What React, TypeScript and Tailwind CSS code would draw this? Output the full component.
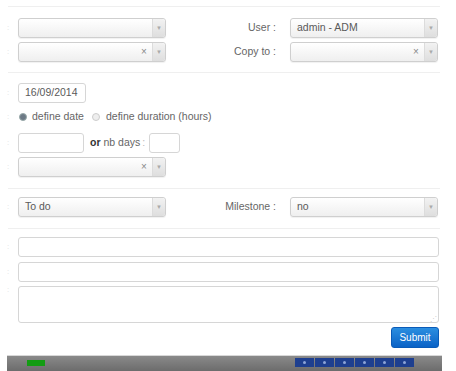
import React from "react";

function Select(props: { value?: string; clear?: boolean; className?: string }) {
  return (
    <div
      className={`h-[20px] flex items-stretch border border-[#cfcfcf] rounded-[3px] bg-gradient-to-b from-white to-[#efefef] shadow-[0_1px_1px_rgba(0,0,0,0.06)] ${props.className ?? "w-[148px]"}`}
    >
      <div className="flex-1 flex items-center pl-[6px] text-[10.5px] text-[#5a5a5a]">
        {props.value}
      </div>
      {props.clear && (
        <div className="w-[16px] flex items-center justify-center text-[10px] text-[#888] leading-none">
          ×
        </div>
      )}
      <div className="w-[13px] border-l border-[#dcdcdc] bg-gradient-to-b from-[#f2f2f2] to-[#dedede] flex items-center justify-center rounded-r-[3px]">
        <span className="text-[6px] text-[#aaa] leading-none">▼</span>
      </div>
    </div>
  );
}

function Input(props: { value?: string; className?: string }) {
  return (
    <div
      className={`h-[20px] border border-[#d6d6d6] rounded-[3px] bg-white flex items-center pl-[6px] text-[10.5px] text-[#5a5a5a] ${props.className ?? ""}`}
    >
      {props.value}
    </div>
  );
}

function Sep(props: { className?: string }) {
  return <div className={`ml-[8px] w-[432px] h-px bg-[#efefef] ${props.className ?? ""}`} />;
}

function Tick() {
  return <span className="w-[10px] pl-[7px] text-[8px] text-[#e2e2e2] leading-none">:</span>;
}

export default function App(): React.JSX.Element {
  return (
    <div className="w-[456px] h-[371px] bg-white overflow-hidden relative font-['Liberation_Sans',Arial,sans-serif]">
      <Sep className="mt-[6px]" />

      <div className="mt-[11px] flex items-center">
        <Tick />
        <Select className="ml-[8px] w-[148px]" />
        <div className="w-[110px] text-right text-[10.5px] text-[#666]">User :</div>
        <Select value="admin - ADM" className="ml-[14px] w-[148px]" />
      </div>
      <div className="mt-[4px] flex items-center">
        <Tick />
        <Select clear className="ml-[8px] w-[148px]" />
        <div className="w-[110px] text-right text-[10.5px] text-[#666]">Copy to :</div>
        <Select clear className="ml-[14px] w-[148px]" />
      </div>

      <Sep className="mt-[10px]" />

      <div className="mt-[10px] flex items-center">
        <Tick />
        <Input value="16/09/2014" className="ml-[8px] w-[68px]" />
      </div>
      <div className="mt-[5px] h-[18px] flex items-center text-[10.5px] text-[#666]">
        <Tick />
        <span className="ml-[9px] w-[8px] h-[8px] rounded-full bg-[#6d7a86] border border-[#9aa]" />
        <span className="ml-[5px]">define date</span>
        <span className="ml-[8px] w-[8px] h-[8px] rounded-full bg-[#eee] border border-[#ccc]" />
        <span className="ml-[6px]">define duration (hours)</span>
      </div>
      <div className="mt-[7px] flex items-center text-[10.5px] text-[#666]">
        <Tick />
        <Input className="ml-[8px] w-[66px]" />
        <span className="ml-[6px] font-bold text-[#333]">or</span>
        <span className="ml-[3px]">nb days</span>
        <span className="ml-[2px] text-[#bbb]">:</span>
        <Input className="ml-[4px] w-[31px]" />
      </div>
      <div className="mt-[4px] flex items-center">
        <Tick />
        <Select clear className="ml-[8px] w-[148px]" />
      </div>

      <Sep className="mt-[11px]" />

      <div className="mt-[8px] flex items-center">
        <Tick />
        <Select value="To do" className="ml-[8px] w-[148px]" />
        <div className="w-[110px] text-right text-[10.5px] text-[#666]">Milestone :</div>
        <Select value="no" className="ml-[14px] w-[148px]" />
      </div>

      <Sep className="mt-[11px]" />

      <div className="mt-[8px] flex items-center">
        <Tick />
        <Input className="ml-[8px] w-[421px]" />
      </div>
      <div className="mt-[5px] flex items-center">
        <Tick />
        <Input className="ml-[8px] w-[421px]" />
      </div>
      <div className="mt-[4px] flex items-start">
        <Tick />
        <div className="ml-[8px] w-[421px] h-[37px] border border-[#d6d6d6] rounded-[3px] bg-white relative">
          <span className="absolute right-[1px] bottom-[0px] text-[7px] text-[#ccc] leading-none">⋰</span>
        </div>
      </div>
      <div className="mt-[4px] flex justify-end pr-[17px]">
        <button className="w-[48px] h-[21px] rounded-[3px] bg-gradient-to-b from-[#2b8ee0] to-[#0a62c6] border border-[#0a5bb8] text-white text-[10px]">
          Submit
        </button>
      </div>

      <div className="absolute left-[7px] top-[355px] w-[435px] h-[16px] border-t border-[#d8d8d8] bg-gradient-to-b from-[#8a8a8a] to-[#6c6c6c] flex items-start">
        <div className="ml-[20px] mt-[4px] w-[18px] h-[6px] bg-[#139c13]" />
        <div className="ml-[250px] mt-[2px] flex gap-[1px]">
          {[0, 1, 2, 3, 4, 5].map((i) => (
            <div key={i} className="w-[19px] h-[9px] bg-[#1e3f8f] flex items-center justify-center">
              <span className="w-[3px] h-[3px] rounded-full bg-[#8ca4d8]" />
            </div>
          ))}
        </div>
      </div>
    </div>
  );
}
